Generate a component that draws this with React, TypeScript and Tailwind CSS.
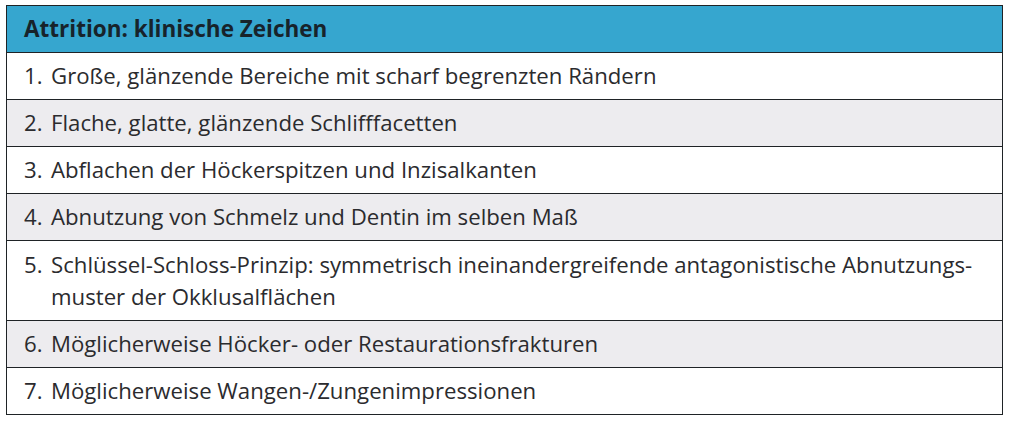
const rows: { n: string; lines: string[] }[] = [
  { n: "1.", lines: ["Große, glänzende Bereiche mit scharf begrenzten Rändern"] },
  { n: "2.", lines: ["Flache, glatte, glänzende Schlifffacetten"] },
  { n: "3.", lines: ["Abflachen der Höckerspitzen und Inzisalkanten"] },
  { n: "4.", lines: ["Abnutzung von Schmelz und Dentin im selben Maß"] },
  {
    n: "5.",
    lines: [
      "Schlüssel-Schloss-Prinzip: symmetrisch ineinandergreifende antagonistische Abnutzungs-",
      "muster der Okklusalflächen",
    ],
  },
  { n: "6.", lines: ["Möglicherweise Höcker- oder Restaurationsfrakturen"] },
  { n: "7.", lines: ["Möglicherweise Wangen-/Zungenimpressionen"] },
];

export default function App() {
  return (
    <div className="h-[421px] w-[1009px] bg-white pl-[6px] pt-[5px] font-['Open_Sans',sans-serif]">
      <div className="w-[997px] border-[1.5px] border-[#1f2326]">
        <div className="flex h-[46px] items-center bg-[#36a6cf] px-[17px] text-[22.5px] font-bold text-[#17232b]">
          Attrition: klinische Zeichen
        </div>
        {rows.map((row, i) => (
          <div
            key={row.n}
            className={`flex border-t-[1.5px] border-[#1f2326] px-[17px] text-[22.2px] leading-[32px] text-[#2b2b2e] ${
              row.lines.length > 1 ? "py-[7.5px]" : "h-[47px] items-center"
            } ${i % 2 === 1 ? "bg-[#edecef]" : "bg-white"}`}
          >
            <span className="w-[27px] shrink-0">{row.n}</span>
            <span>
              {row.lines.map((line) => (
                <span key={line} className="block whitespace-nowrap">
                  {line}
                </span>
              ))}
            </span>
          </div>
        ))}
      </div>
    </div>
  );
}
